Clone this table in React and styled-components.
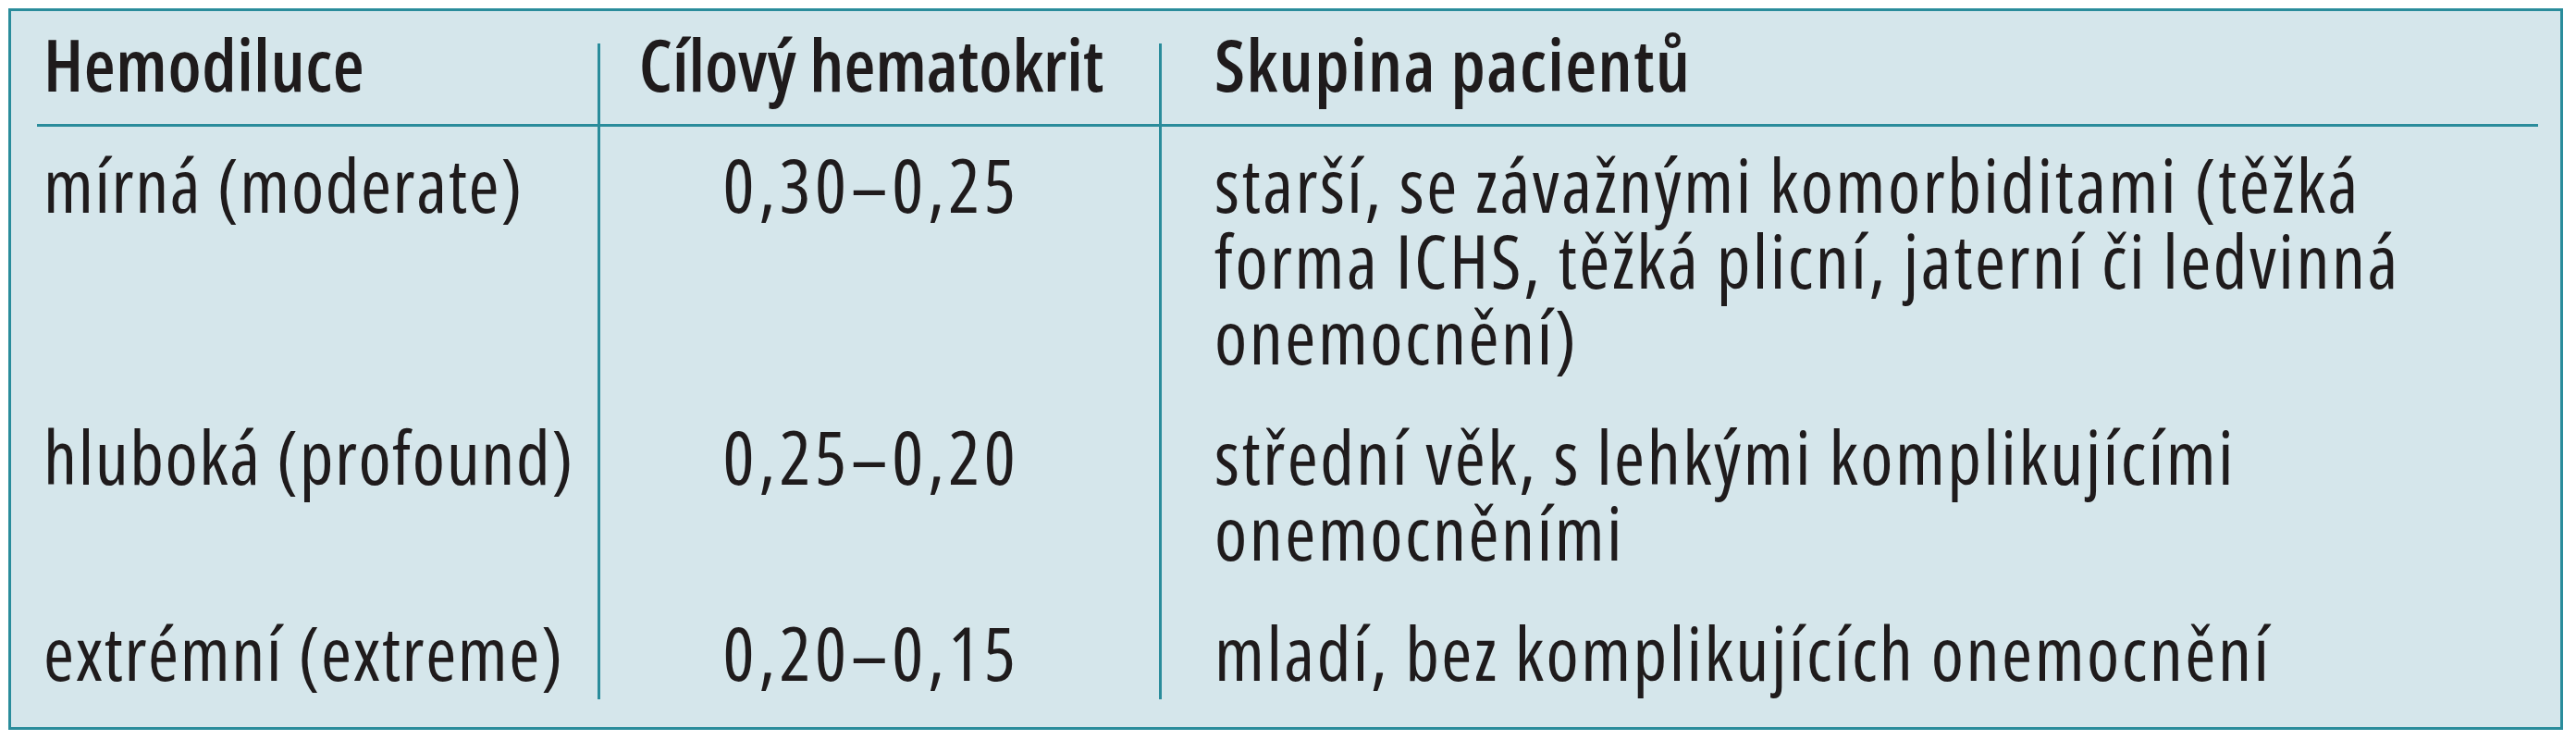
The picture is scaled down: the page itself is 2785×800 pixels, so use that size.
import React from 'react';
import styled, { createGlobalStyle } from 'styled-components';

const GlobalStyle = createGlobalStyle`
  html, body {
    margin: 0;
    padding: 0;
    background: #ffffff;
  }
`;

const TEAL = '#2a8c9b';
const INK = '#1f1b1c';

const Frame = styled.div`
  box-sizing: border-box;
  margin: 9px 0 0 9px;
  width: 2762px;
  height: 780px;
  padding: 35px 24px 0 28px;
  border: 3px solid ${TEAL};
  background: #d5e6eb;
  font-family: "Open Sans", "Liberation Sans", sans-serif;
  font-stretch: 75%;
  color: ${INK};
`;

const Grid = styled.div`
  display: grid;
  grid-template-columns: 606px 607px 1fr;
`;

// per column: padding and tracking
const colPadding = ['0 0 0 7px', '0 18px 0 0', '0 0 0 57px'];
const colTracking = ['1.6px', '4.6px', '2.5px'];
const headTracking = ['0.6px', '0', '1.4px'];

const HeadCell = styled.div`
  box-sizing: border-box;
  height: 90px;
  padding: ${({ $col }) => colPadding[$col]};
  border-bottom: 3px solid ${TEAL};
  border-left: ${({ $col }) => ($col > 0 ? `3px solid ${TEAL}` : 'none')};
  text-align: ${({ $col }) => ($col === 1 ? 'center' : 'left')};
  font-size: 78px;
  font-weight: 600;
  letter-spacing: ${({ $col }) => headTracking[$col]};
  line-height: 45px;
  white-space: nowrap;
`;

const Cell = styled.div`
  padding: ${({ $col }) => colPadding[$col]};
  padding-top: 21px;
  padding-bottom: ${({ $last }) => ($last ? '10px' : '27px')};
  border-left: ${({ $col }) => ($col > 0 ? `3px solid ${TEAL}` : 'none')};
  text-align: ${({ $col }) => ($col === 1 ? 'center' : 'left')};
  font-size: 80px;
  letter-spacing: ${({ $col }) => colTracking[$col]};
  line-height: 82px;
  white-space: nowrap;
`;

const headers = ['Hemodiluce', 'Cílový hematokrit', 'Skupina pacientů'];

const rows = [
  {
    level: 'mírná (moderate)',
    range: '0,30–0,25',
    group: [
      'starší, se závažnými komorbiditami (těžká',
      'forma ICHS, těžká plicní, jaterní či ledvinná',
      'onemocnění)',
    ],
  },
  {
    level: 'hluboká (profound)',
    range: '0,25–0,20',
    group: ['střední věk, s lehkými komplikujícími', 'onemocněními'],
  },
  {
    level: 'extrémní (extreme)',
    range: '0,20–0,15',
    group: ['mladí, bez komplikujících onemocnění'],
  },
];

export default function App() {
  return (
    <>
      <GlobalStyle />
      <Frame>
        <Grid>
          {headers.map((h, i) => (
            <HeadCell key={h} $col={i}>
              {h}
            </HeadCell>
          ))}
          {rows.map((row, r) => {
            const last = r === rows.length - 1;
            return (
              <React.Fragment key={row.level}>
                <Cell $col={0} $last={last}>{row.level}</Cell>
                <Cell $col={1} $last={last}>{row.range}</Cell>
                <Cell $col={2} $last={last}>
                  {row.group.map((line, i) => (
                    <div key={i}>{line}</div>
                  ))}
                </Cell>
              </React.Fragment>
            );
          })}
        </Grid>
      </Frame>
    </>
  );
}
